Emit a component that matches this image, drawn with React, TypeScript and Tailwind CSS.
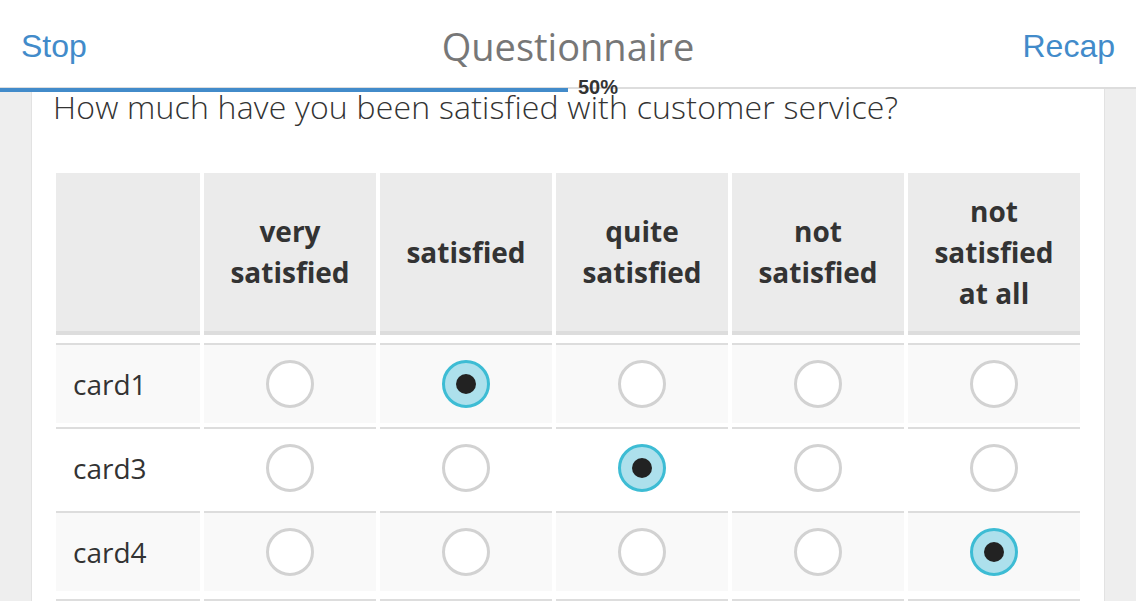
import React from 'react';

const columns = [
  ['very', 'satisfied'],
  ['satisfied'],
  ['quite', 'satisfied'],
  ['not', 'satisfied'],
  ['not', 'satisfied', 'at all'],
];

const rows = [
  { label: 'card1', selected: 1 },
  { label: 'card3', selected: 2 },
  { label: 'card4', selected: 4 },
  { label: 'card5', selected: -1 },
];

const Radio: React.FC<{ checked: boolean }> = ({ checked }) =>
  checked ? (
    <span className="flex h-[48px] w-[48px] items-center justify-center rounded-full border-[3px] border-[#3dbcd4] bg-[#ade0ec]">
      <span className="h-[20px] w-[20px] rounded-full bg-[#222]" />
    </span>
  ) : (
    <span className="block h-[48px] w-[48px] rounded-full border-[3px] border-[#d2d2d2] bg-white" />
  );

const App: React.FC = () => {
  return (
    <div className="relative h-[601px] w-[1136px] overflow-hidden bg-[#eeeeee] font-['Open_Sans',sans-serif] text-[#333]">
      {/* Top bar */}
      <header className="grid h-[89px] grid-cols-[1fr_auto_1fr] items-center border-b-2 border-[#dddddd] bg-white px-[21px] pt-[5px]">
        <span className="justify-self-start font-['Liberation_Sans',Arial,sans-serif] text-[32px] text-[#428bca]">Stop</span>
        <span className="text-[38px] text-[#777]">Questionnaire</span>
        <span className="justify-self-end font-['Liberation_Sans',Arial,sans-serif] text-[32px] text-[#428bca]">Recap</span>
      </header>

      {/* Progress */}
      <div className="absolute left-0 top-[88px] h-[4px] w-[568px] bg-[#428bca]" />
      <span className="absolute left-[578px] top-[76px] font-['Liberation_Sans',Arial,sans-serif] text-[20px] font-bold leading-[22px] text-[#333]">
        50%
      </span>

      {/* Card */}
      <main className="mx-[31px] border-x border-[#e2e2e2] bg-white px-[24px]">
        <p className="-ml-[3px] pt-[2px] text-[32px] font-light leading-[32px] tracking-[0.2px] text-[#333]">
          How much have you been satisfied with customer service?
        </p>

        <div className="mt-[50px] grid grid-cols-[144px_repeat(5,172px)] gap-1">
          <div className="mb-1 h-[162px] border-b-4 border-[#dddddd] bg-[#ebebeb]" />
          {columns.map((lines, i) => (
            <div
              key={i}
              className="mb-1 flex h-[162px] flex-col items-center justify-center border-b-4 border-[#dddddd] bg-[#ebebeb] text-center text-[28px] font-bold leading-[41px] text-[#333]"
            >
              {lines.map(l => (
                <span key={l}>{l}</span>
              ))}
            </div>
          ))}

          {rows.map((row, r) => {
            const bg = r % 2 === 0 ? 'bg-[#f9f9f9]' : 'bg-white';
            const gap = r === 2 ? 'mb-1' : '';
            return (
              <React.Fragment key={row.label}>
                <div className={`flex h-[80px] items-center border-t-2 border-[#dddddd] pl-[17px] text-[28px] text-[#333] ${bg} ${gap}`}>
                  {row.label}
                </div>
                {columns.map((_, c) => (
                  <div
                    key={c}
                    className={`flex h-[80px] items-center justify-center border-t-2 border-[#dddddd] ${bg} ${gap}`}
                  >
                    <Radio checked={row.selected === c} />
                  </div>
                ))}
              </React.Fragment>
            );
          })}
        </div>
      </main>
    </div>
  );
};

export default App;
